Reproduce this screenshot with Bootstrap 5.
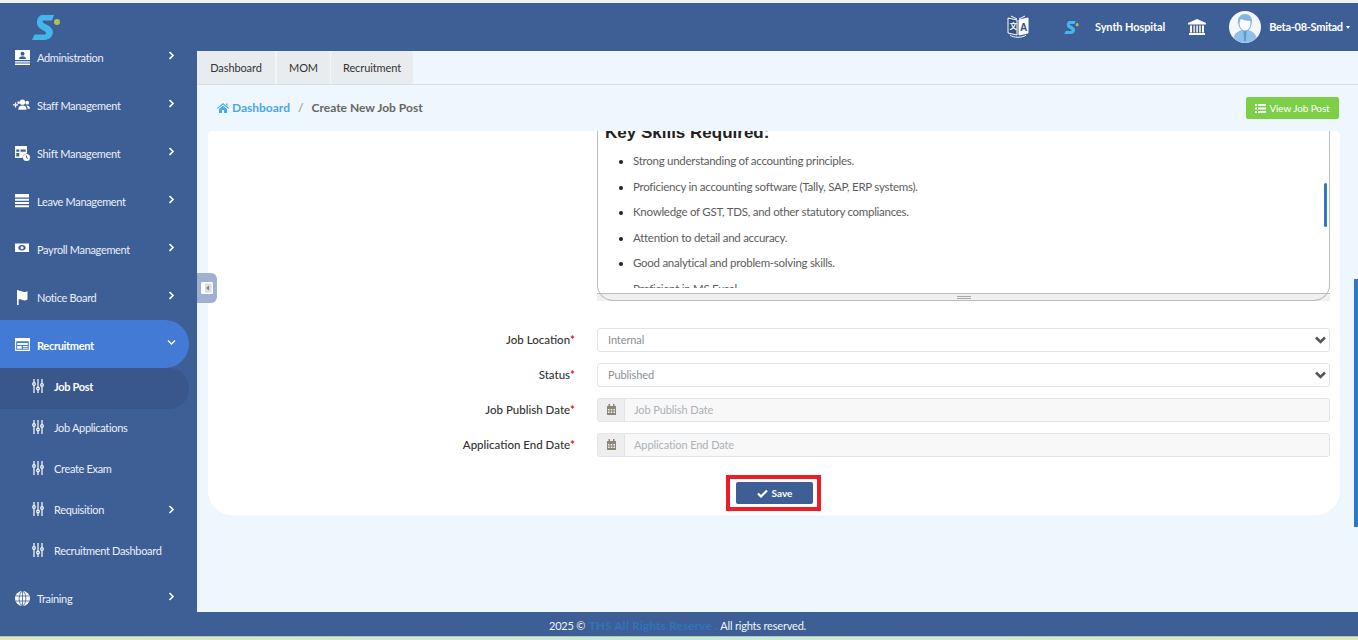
<!DOCTYPE html>
<html lang="en"><head><meta charset="utf-8"><title>Create New Job Post</title>
<link href="https://cdn.jsdelivr.net/npm/bootstrap@5.3.0/dist/css/bootstrap.min.css" rel="stylesheet">
<style>
html,body{height:640px;overflow:hidden}
body{font-family:Lato,"Noto Sans",sans-serif;font-size:12px;background:#f2f2f2;color:#555;padding-top:3px}
.shell{height:637px;display:flex;flex-direction:column}
.upper{flex:1;display:flex;min-height:0;background:#3e5e96;position:relative}
.side{width:197px;flex:none;overflow:hidden;color:#e8eefa}
.logo-box{height:29px;padding:10px 0 0 30px}
.side-item{height:48px;display:flex;align-items:center;width:189px;padding-left:15px;padding-right:14px;color:#eaf0fa;font-size:11px;letter-spacing:-.33px;border-radius:0 24px 24px 0;text-decoration:none}
.side-item .lbl{flex:1;padding-top:4px;padding-left:7px;white-space:nowrap}
.side-item .ic{width:15px;height:15px;fill:#fff;flex:none;margin-top:2px}
.side-item .chev{width:7px;height:9px;fill:none;stroke:#fff;stroke-width:1.6;margin-top:-2px;flex:none}
.side-item.is-open{background:#437ad6;font-weight:700;color:#fff}
.sub-item{height:41px;display:flex;align-items:center;width:189px;padding-left:32px;padding-right:14px;color:#eaf0fa;font-size:11px;letter-spacing:-.33px;border-radius:0 20px 20px 0;text-decoration:none}
.sub-item .lbl{flex:1;padding-left:10px;white-space:nowrap;margin-top:-2px}
.sub-item .ic{width:12px;height:14px;flex:none;margin-top:-5px}
.sub-item .chev{width:7px;height:9px;fill:none;stroke:#fff;stroke-width:1.6;margin-top:-5px}
.sub-item.is-active{background:#39578a;font-weight:700;color:#fff}
.work{flex:1;min-width:0;display:flex;flex-direction:column}
.topbar{height:48px;flex:none;color:#fff;font-size:11px;font-weight:700}
.nm-one{margin-left:15px;letter-spacing:-.1px}
.nm-two{margin-left:8px;letter-spacing:-.28px}
.tabs-row{height:34px;flex:none;background:#eef6fe;border-bottom:1px solid #dcdfe3;gap:2px;flex-wrap:nowrap}
.tab-link{height:33px;display:flex;align-items:center;justify-content:center;background:#e9ecef;color:#333;font-size:11px;letter-spacing:-.1px;border-radius:3px 3px 0 0;text-decoration:none;padding-top:2px}
.tw1{width:78px}.tw2{width:53px;margin-right:-1px}.tw3{width:82px}
.crumb-row{height:46px;flex:none;background:#eef6fe;padding:0 19px 0 20px}
.crumb-row .breadcrumb{font-size:12px;font-weight:700;--bs-breadcrumb-divider-color:#aaa;--bs-breadcrumb-item-active-color:#666;--bs-breadcrumb-item-padding-x:8px;margin:0}
.crumb-row a{color:#4aa8f0;text-decoration:none}
.green-btn{background:#7ccf47;color:#fff;border:0;font-size:10px;letter-spacing:-.1px;height:22px;width:93px;padding:0;border-radius:2px;display:flex;align-items:center;justify-content:center;gap:3px}
.scroll-zone{flex:1;min-height:0;background:#eef6fe;padding:0 18px 0 11px;overflow:hidden}
.sheet{background:#fff;height:384px;border-radius:5px 5px 24px 24px;overflow:hidden}
.ed-outer{margin-left:389px;width:733px;height:170px;position:relative;display:flex;flex-direction:column}
.ed-outer::after{content:"";position:absolute;inset:0;border:1px solid #bdbdbd;border-top:0;border-radius:0 0 16px 16px;pointer-events:none}
.ed-body{height:162px;flex:none;padding-bottom:5px}
.ed-clip{height:157px;overflow:hidden;padding-left:8px}
.ed-clip h3{font-family:"Liberation Sans",sans-serif;font-size:17px;font-weight:700;color:#222;line-height:20px;margin:-8px 0 0}
.ed-clip ul{padding-left:28px;margin:5px 0 0;color:#5d5d5d;font-size:11.5px;letter-spacing:-.27px}
.ed-clip li{height:25.5px;line-height:25.5px;white-space:nowrap}
.ed-clip li::marker{color:#222}
.ed-foot{flex:1;background:#f0f0f0;border-top:1px solid #bdbdbd;display:flex;align-items:center;justify-content:center}
.grip{width:14px;height:3px;border-top:1px solid #aaa;border-bottom:1px solid #aaa}
.ed-thumb{position:absolute;right:3px;top:52px;width:3px;height:44px;background:#2f79c2;border-radius:2px}
.field-rows{margin-top:27px;padding-right:10px}
.field{display:flex;gap:22px;align-items:center;margin-bottom:11px;height:24px}
.field:last-child{margin-bottom:0}
.field-lab{width:367px;text-align:right;margin:0;color:#333;font-weight:500;font-size:11.5px;white-space:nowrap}
.field-lab b{color:#e0202c;font-weight:700}
.field .form-select,.field .form-control{font-size:11px;height:24px;min-height:0;padding:0 9px 1px;border-radius:3px;border:1px solid #e2e4e8;letter-spacing:-.1px}
.field .form-select{color:#8a8f94;flex:1;width:auto;height:23.500px;padding:0 9px 0 10px;background-image:url("data:image/svg+xml,%3csvg xmlns='http://www.w3.org/2000/svg' viewBox='0 0 13 10'%3e%3cpath fill='none' stroke='%23555' stroke-width='2.600' d='M2 2.500l4.500 4.500L11 2.500'/%3e%3c/svg%3e");background-position:right 2px center;background-size:13px 10px}
.field .form-control{background:#f8f8f8}
.field .form-control::placeholder{color:#adb2b7}
.field .input-group-text{height:24px;width:28px;padding:0 0 2px;justify-content:center;background:#eee;border:1px solid #e2e4e8;border-radius:3px 0 0 3px}
.field .input-group{flex:1;flex-wrap:nowrap}
.save-wrap{margin-top:18px;display:flex;justify-content:center;padding-right:1px}
.save-mark{border:4px solid #ee1c25;padding:3px 4px 3px 6px;line-height:0}
.save-btn{background:#3e5e96;border:0;color:#fff;width:77px;height:22px;font-size:10px;font-weight:700;border-radius:2px;padding:0;display:inline-flex;align-items:center;justify-content:center;gap:4px}
.foot{height:24px;flex:none;background:#3e5e96;color:#f1f5fb;text-align:center;font-size:11px;letter-spacing:-.2px;line-height:28px;white-space:nowrap;padding-right:3px}
.foot strong{color:#2f74bd;font-size:11.5px;letter-spacing:.3px;padding-left:1px}
.strip{height:4px;flex:none;background:linear-gradient(90deg,#dcebbb,#c6ecdf 50%,#dcebbb);border-top:1px solid #b9c2b3}
.toggler{position:absolute;left:197px;top:270px;width:20px;height:30px;background:#9fb0d0;border-radius:0 6px 6px 0;display:flex;align-items:center;justify-content:center}
.page-thumb{position:absolute;right:0;top:276px;width:4px;height:248px;background:#2f79c2}
.ic-bank{margin-left:23px}.ic-lang{margin-left:810px}.ic-mini{margin-left:33px}.ic-av{margin-left:23px}
.caret-mini{margin-left:3px;border-left:2.500px solid transparent;border-right:2.500px solid transparent;border-top:3px solid #fff}
</style></head><body>
<svg width="0" height="0" class="d-block" aria-hidden="true"><defs>
<symbol id="sl" viewBox="0 0 12 14"><g fill="none" stroke="#fff" stroke-width="1.200"><path d="M2 0V3.500M2 6.500V14M6 0V8M6 11V14M10 0V4.500M10 7.500V14"/><circle cx="2" cy="5" r="1.300"/><circle cx="6" cy="9.500" r="1.300"/><circle cx="10" cy="6" r="1.300"/></g></symbol>
<symbol id="cv" viewBox="0 0 7 9"><path d="M1.500 1L5 4.500 1.500 8"/></symbol>
<symbol id="cal" viewBox="0 0 11 11"><path fill="#8c8678" d="M1 2h9v9H1zM2.500 0h1.500v3H2.500zM7 0h1.500v3H7z"/><path fill="#eee" d="M2 5h1.600v1.400H2zM4.700 5h1.600v1.400H4.700zM7.400 5H9v1.400H7.400zM2 7.600h1.600V9H2zM4.700 7.600h1.600V9H4.700zM7.400 7.600H9V9H7.400z"/></symbol>
<symbol id="sg" viewBox="30 10 30 29"><path fill="#43b6ea" d="M42 12H54L52 17.500H44C42 17.500 42.500 19.500 44 20.200L49 23C54 26 54 32 50 35 48 36.500 46 37 43 37H32L34.500 31.500H44C46.500 31.500 46.500 29.500 45 28.500L40 25.500C35 22.500 36.500 12.500 42 12Z"/><circle cx="57" cy="19" r="3" fill="#a9c64a"/></symbol>
</defs></svg>
<div class="shell">
<div class="upper">
<aside class="side">
<div class="logo-box"><svg width="30" height="29" viewBox="30 10 30 29" class="d-block overflow-visible"><use href="#sg" x="30" y="10" width="30" height="29"/></svg></div>
<a class="side-item" href="#"><svg class="ic" viewBox="0 0 15 15"><path d="M0 0h15v10H0zM0 11.200h15v1.200H0zM0 13.400h15V15H0z"/><circle cx="7.500" cy="3.800" r="2" fill="#3e5e96"/><path d="M3.800 9c.3-2 1.800-2.800 3.700-2.800S10.900 7 11.200 9z" fill="#3e5e96"/></svg><span class="lbl">Administration</span><svg class="chev"><use href="#cv"/></svg></a>
<a class="side-item" href="#"><svg class="ic" viewBox="0 0 18 15" style="margin-left:-2px;width:17px"><path d="M0 6.200h2V4.200h1.400v2h2v1.400h-2v2H2v-2H0z"/><circle cx="10" cy="4" r="2.800"/><circle cx="15" cy="4.500" r="2"/><circle cx="6" cy="4.500" r="1.400"/><path d="M5.500 12c0-3 2-4.500 4.500-4.500s4.500 1.500 4.500 4.500z"/><path d="M15 7.500c1.800 0 3 1.500 3 3.500h-2.500c0-1.200-.4-2.400-1.500-3z"/></svg><span class="lbl">Staff Management</span><svg class="chev"><use href="#cv"/></svg></a>
<a class="side-item" href="#"><svg class="ic" viewBox="0 0 15 15"><path d="M0 0h12v7.500a5 5 0 0 0-4.500 4.500H0zM1.300 3.500v2.200h3V3.500zM5.500 3.500v2.200h5.200V3.500zM1.300 7v3.500h3V7z" fill-rule="evenodd"/><circle cx="11.500" cy="11.500" r="3.500"/><path d="M11.500 9.500v2.200l1.500.9" fill="none" stroke="#3e5e96" stroke-width=".9"/></svg><span class="lbl">Shift Management</span><svg class="chev"><use href="#cv"/></svg></a>
<a class="side-item" href="#"><svg class="ic" viewBox="0 0 15 15"><path d="M0 0h14v3.500H0zM0 4.800h14v2H0zM0 8h14v2H0zM0 11.200h14v2H0z"/></svg><span class="lbl">Leave Management</span><svg class="chev"><use href="#cv"/></svg></a>
<a class="side-item" href="#"><svg class="ic" viewBox="0 0 15 15"><path d="M0 1.500h14v8.500H0z"/><ellipse cx="7" cy="5.800" rx="3.600" ry="2.700" fill="#3e5e96"/><circle cx="7" cy="5.800" r="1.500"/></svg><span class="lbl">Payroll Management</span><svg class="chev"><use href="#cv"/></svg></a>
<a class="side-item" href="#"><svg class="ic" viewBox="0 0 15 15"><path d="M2 0h1.600v15H2zM3.600 1c2.500-1 3.800 1 5.500 1 1.500 0 2.500-.4 3.400-.8V9.500c-1 .5-2 .9-3.400.9-1.800 0-3-1.900-5.500-.9z"/></svg><span class="lbl">Notice Board</span><svg class="chev"><use href="#cv"/></svg></a>
<a class="side-item is-open" href="#"><svg class="ic" viewBox="0 0 15 15"><path d="M0 0h15v13H0zM1.200 3.300v8.500h12.600V3.300zM2.200 5h10.600v2H2.200zM2.200 8h4.500v2.800H2.200zM8 8h4.800v1H8zM8 9.800h4.800v1H8z" fill-rule="evenodd"/></svg><span class="lbl">Recruitment</span><svg viewBox="0 0 9 7" width="9" height="7" class="flex-none" style="margin-top:-3px;margin-right:-1px"><path d="M1 1.500l3.500 3.500L8 1.500" fill="none" stroke="#fff" stroke-width="1.400"/></svg></a>
<a class="sub-item is-active" href="#"><svg class="ic"><use href="#sl"/></svg><span class="lbl">Job Post</span></a>
<a class="sub-item" href="#"><svg class="ic"><use href="#sl"/></svg><span class="lbl">Job Applications</span></a>
<a class="sub-item" href="#"><svg class="ic"><use href="#sl"/></svg><span class="lbl">Create Exam</span></a>
<a class="sub-item" href="#"><svg class="ic"><use href="#sl"/></svg><span class="lbl">Requisition</span><svg class="chev"><use href="#cv"/></svg></a>
<a class="sub-item" href="#"><svg class="ic"><use href="#sl"/></svg><span class="lbl">Recruitment Dashboard</span></a>
<a class="side-item" href="#"><svg class="ic" viewBox="0 0 15 15"><circle cx="7.500" cy="7.500" r="7.500"/><g fill="none" stroke="#3e5e96" stroke-width=".8"><ellipse cx="7.500" cy="7.500" rx="3.300" ry="7.200"/><path d="M7.500 0V15M.5 5H14.500M.5 10H14.500"/></g></svg><span class="lbl">Training</span><svg class="chev"><use href="#cv"/></svg></a>
</aside>
<main class="work">
<header class="topbar d-flex align-items-center">
<div class="d-flex align-items-center w-100">
<svg width="22" height="24" viewBox="0 0 22 24" class="d-block ic-lang"><path d="M1 3l9 2v15l-9-2z" fill="#33507f" stroke="#fff"/><path d="M21 3l-9 2v15l9-2z" fill="#fff" stroke="#fff"/><path d="M4 1l6 3M18 1l-6 3M3 20c3 3 13 3 16 0" fill="none" stroke="#fff"/><text x="2.500" y="14" font-size="7.500" fill="#fff" font-family="'Noto Sans CJK SC',sans-serif">文</text><text x="13" y="15.500" font-size="10" fill="#33507f" font-weight="700" font-family="'Liberation Sans',sans-serif">A</text></svg>
<svg width="18" height="15" viewBox="30 10 30 29" class="d-block ic-mini"><use href="#sg" x="30" y="10" width="30" height="29"/></svg>
<span class="text-nowrap nm-one">Synth Hospital</span>
<svg width="18" height="16" viewBox="0 0 18 16" class="d-block ic-bank"><path fill="#fff" d="M9 0l9 4v1.500H0V4zM1 14h16v2H1z"/><path fill="#fff" d="M2 6.500h2v7H2z"/><path fill="#f3c9c9" d="M5.300 6.500h1.800v7H5.300z"/><path fill="#cfe3f7" d="M8.200 6.500h1.800v7H8.200z"/><path fill="#f0e2b0" d="M11.100 6.500h1.800v7h-1.800z"/><path fill="#fff" d="M14 6.500h2v7h-2z"/></svg>
<svg width="32" height="32" viewBox="0 0 32 32" class="d-block ic-av"><circle cx="16" cy="16" r="16" fill="#f4f6f9"/><path d="M4.500 27c1-5 5-7 8-8h7c3 1 7 3 8 8a16 16 0 0 1-23 0z" fill="#8fc0e8"/><path d="M10 12c0-5 3-7 6-7s6 2 6 7-3 8-6 8-6-3-6-8z" fill="#fff" stroke="#6ba6d8"/><path d="M9 13c-1-7 3-10 7-10s8 3 7 10l-1-3c-4 0-8-1-10-2z" fill="#7fb6e4"/><path d="M14.500 20h3l-.7 10h-1.600z" fill="#5c9ad2"/></svg>
<span class="text-nowrap nm-two">Beta-08-Smitad</span>
<span class="d-block flex-none caret-mini"></span>
</div>
</header>
<nav class="nav tabs-row">
<a class="tab-link tw1" href="#">Dashboard</a><a class="tab-link tw2" href="#">MOM</a><a class="tab-link tw3" href="#">Recruitment</a>
</nav>
<div class="crumb-row d-flex align-items-center justify-content-between">
<ol class="breadcrumb"><li class="breadcrumb-item"><a href="#"><svg width="12" height="10" viewBox="0 0 12 10" style="vertical-align:-1px"><path fill="#4aa8f0" d="M6 0l6 5-.7.8L6 1.500.7 5.800 0 5zM2 6l4-3.300L10 6v4H7V7H5v3H2zM9 .5h1.500v2.500L9 2z"/></svg> Dashboard</a></li><li class="breadcrumb-item active">Create New Job Post</li></ol>
<button class="green-btn" type="button"><svg width="11" height="9" viewBox="0 0 11 9"><path fill="#fff" d="M0 0h2v2H0zM3 0h8v2H3zM0 3.500h2v2H0zM3 3.500h8v2H3zM0 7h2v2H0zM3 7h8v2H3z"/></svg>View Job Post</button>
</div>
<div class="scroll-zone">
<form class="sheet" onsubmit="return false">
<div class="ed-outer">
<div class="ed-body"><div class="ed-clip"><h3>Key Skills Required:</h3>
<ul><li>Strong understanding of accounting principles.</li><li>Proficiency in accounting software (Tally, SAP, ERP systems).</li><li>Knowledge of GST, TDS, and other statutory compliances.</li><li>Attention to detail and accuracy.</li><li>Good analytical and problem-solving skills.</li><li>Proficient in MS Excel.</li></ul></div></div>
<div class="ed-foot"><div class="grip"></div></div>
<div class="ed-thumb"></div>
</div>
<div class="field-rows">
<div class="field"><label class="field-lab">Job Location<b>*</b></label><select class="form-select"><option>Internal</option></select></div>
<div class="field"><label class="field-lab">Status<b>*</b></label><select class="form-select"><option>Published</option></select></div>
<div class="field"><label class="field-lab">Job Publish Date<b>*</b></label><div class="input-group"><span class="input-group-text"><svg width="11" height="11"><use href="#cal"/></svg></span><input class="form-control" placeholder="Job Publish Date"></div></div>
<div class="field"><label class="field-lab">Application End Date<b>*</b></label><div class="input-group"><span class="input-group-text"><svg width="11" height="11"><use href="#cal"/></svg></span><input class="form-control" placeholder="Application End Date"></div></div>
</div>
<div class="save-wrap"><div class="save-mark"><button class="save-btn" type="submit"><svg width="11" height="9" viewBox="0 0 11 9"><path d="M1 4.500l3 3L10 1.500" fill="none" stroke="#fff" stroke-width="2.200"/></svg>Save</button></div></div>
</form>
</div>
</main>
<div class="toggler"><svg width="12" height="12" viewBox="0 0 12 12"><rect width="12" height="12" rx="1.500" fill="#fff"/><rect x="4" y="1.500" width="6.500" height="9" fill="#d5dcea"/><path fill="#6f84ab" d="M8 3.500v5L5 6z"/></svg></div>
<div class="page-thumb"></div>
</div>
<footer class="foot">2025 © <strong>THS All Rights Reserve .</strong> All rights reserved.</footer>
<div class="strip"></div>
</div>
<script src="https://cdn.jsdelivr.net/npm/bootstrap@5.3.0/dist/js/bootstrap.bundle.min.js"></script>
</body></html>
